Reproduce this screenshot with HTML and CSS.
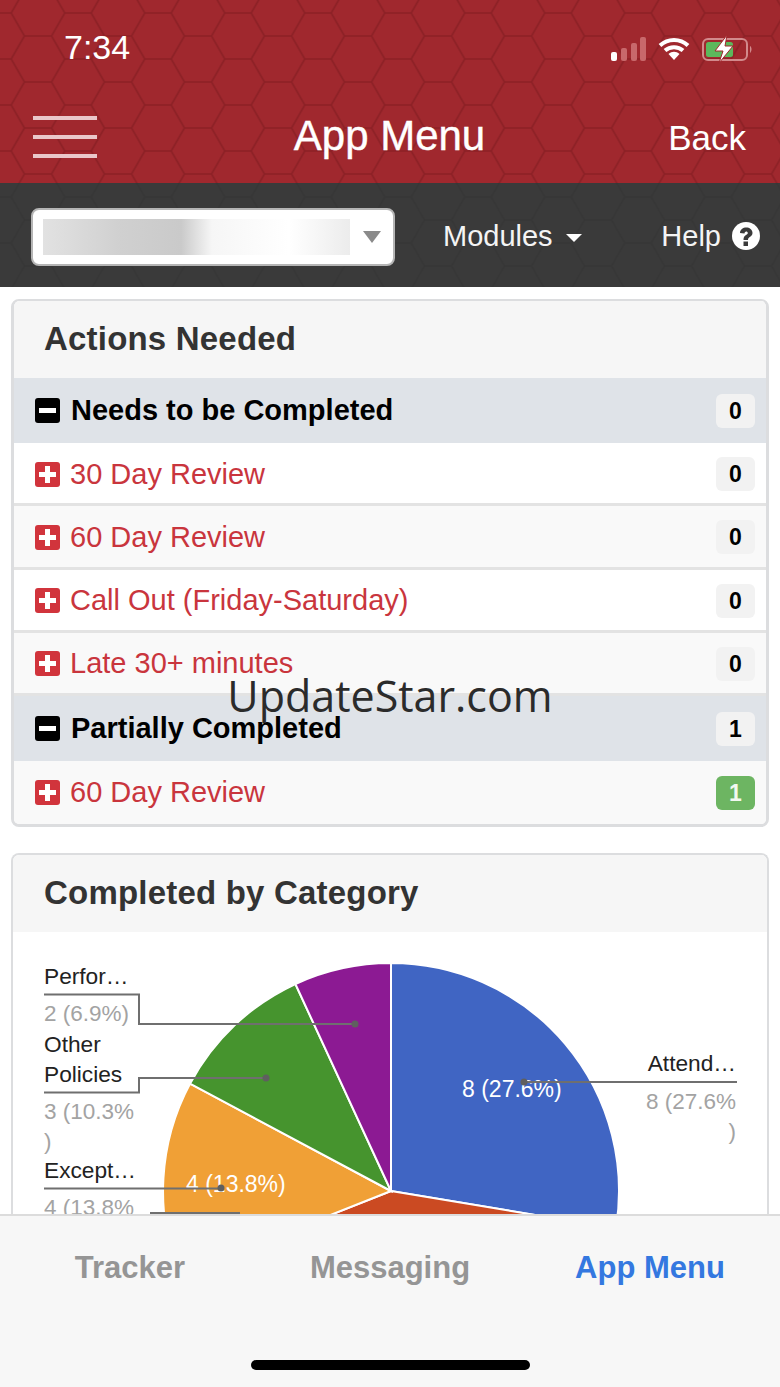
FILE: index.html
```html
<!DOCTYPE html>
<html lang="en">
<head>
<meta charset="utf-8">
<title>App Menu</title>
<link rel="stylesheet" href="styles.css">
</head>
<body>
<div class="screen">
  <header class="top">
    <svg class="hex" width="780" height="287" aria-hidden="true">
      <defs>
        <pattern id="hexred" width="80" height="46" patternUnits="userSpaceOnUse" x="51.500" y="13">
          <path d="M0 23L13.250 0H39.750L53 23L39.750 46H13.250L0 23M53 23H80" fill="none" stroke="#8b2025" stroke-width="1.600"/>
        </pattern>
        <pattern id="hexdark" width="80" height="46" patternUnits="userSpaceOnUse" x="51.500" y="13">
          <path d="M0 23L13.250 0H39.750L53 23L39.750 46H13.250L0 23M53 23H80" fill="none" stroke="#363636" stroke-width="1.600"/>
        </pattern>
      </defs>
      <rect width="780" height="183" fill="url(#hexred)"/>
      <rect y="183" width="780" height="104" fill="url(#hexdark)"/>
    </svg>
    <div class="status">
      <span class="time">7:34</span>
      <div class="status-icons">
        <svg width="36" height="24" viewBox="0 0 36 24" aria-hidden="true">
          <rect x="1" y="15" width="6" height="9" rx="2" fill="#fff"/>
          <rect x="11" y="11" width="6" height="13" rx="2" fill="#c8686b"/>
          <rect x="21" y="6" width="6" height="18" rx="2" fill="#c8686b"/>
          <rect x="30" y="0" width="6" height="24" rx="2" fill="#c8686b"/>
        </svg>
        <svg width="32" height="24" viewBox="0 0 32 24" aria-hidden="true">
          <path d="M2 8.500C10 1 22 1 30 8.500M7 13.500C12 9 20 9 25 13.500" fill="none" stroke="#fff" stroke-width="4"/>
          <path d="M10.500 17C14 14 18 14 21.500 17L16 23Z" fill="#fff"/>
        </svg>
        <svg width="50" height="28" viewBox="0 0 50 28" aria-hidden="true">
          <rect x="1" y="4" width="44" height="21" rx="5" fill="none" stroke="#d28a8c" stroke-width="2"/>
          <rect x="4" y="7" width="27" height="15" rx="2.500" fill="#5cb85c"/>
          <path d="M48 11C50 12 50 16 48 18Z" fill="#d28a8c"/>
          <path d="M25 0L13 16H21L17 28L31 11H23Z" fill="#fff" stroke="#a0282d" stroke-width="1"/>
        </svg>
      </div>
    </div>
    <div class="navbar">
      <div class="burger"><span></span><span></span><span></span></div>
      <h1 class="title">App Menu</h1>
      <span class="back">Back</span>
    </div>
    <div class="toolbar">
      <div class="select">
        <div class="blur"></div>
        <span class="select-arrow"></span>
      </div>
      <span class="tool-link modules">Modules <span class="caret"></span></span>
      <span class="tool-link help">Help
        <svg width="28" height="28" viewBox="0 0 28 28" aria-hidden="true">
          <circle cx="14" cy="14" r="14" fill="#fff"/>
          <path d="M8 11C8 3.500 20.500 3.500 20.500 11C20.500 15 16 14.500 16 18H11.500C11.500 12.500 15.800 13 15.800 11C15.800 8.800 12.500 8.800 12.500 11.500Z" fill="#3a3a3a"/>
          <rect x="11.500" y="19.500" width="4.500" height="4.500" fill="#3a3a3a"/>
        </svg>
      </span>
    </div>
  </header>

  <main class="content">
    <section class="panel">
      <h2 class="panel-title">Actions Needed</h2>
      <div class="row group">
        <span class="toggle minus"></span><span class="label">Needs to be Completed</span><span class="badge">0</span>
      </div>
      <div class="row item white">
        <span class="toggle plus"></span><span class="label">30 Day Review</span><span class="badge">0</span>
      </div>
      <div class="row item">
        <span class="toggle plus"></span><span class="label">60 Day Review</span><span class="badge">0</span>
      </div>
      <div class="row item white">
        <span class="toggle plus"></span><span class="label">Call Out (Friday-Saturday)</span><span class="badge">0</span>
      </div>
      <div class="row item">
        <span class="toggle plus"></span><span class="label">Late 30+ minutes</span><span class="badge">0</span>
      </div>
      <div class="row group">
        <span class="toggle minus"></span><span class="label">Partially Completed</span><span class="badge">1</span>
      </div>
      <div class="row item last">
        <span class="toggle plus"></span><span class="label">60 Day Review</span><span class="badge green">1</span>
      </div>
    </section>

    <section class="panel chart-panel">
      <h2 class="panel-title">Completed by Category</h2>
      <svg class="chart" width="754" height="340" viewBox="13 932 754 340" role="img">
        <path d="M391 1191V963A228 228 0 0 1 615.900 1228.400Z" fill="#4065c3" stroke="#fff" stroke-width="2"/>
        <path d="M391 1191L615.900 1228.400A228 228 0 0 1 179 1275Z" fill="#cb4a22" stroke="#fff" stroke-width="2"/>
        <path d="M391 1191L179 1275A228 228 0 0 1 190 1083.700Z" fill="#f0a036" stroke="#fff" stroke-width="2"/>
        <path d="M391 1191L190 1083.700A228 228 0 0 1 295.400 984Z" fill="#46942e" stroke="#fff" stroke-width="2"/>
        <path d="M391 1191L295.400 984A228 228 0 0 1 391 963Z" fill="#8c1a93" stroke="#fff" stroke-width="2"/>
        <text class="pie-text" x="462" y="1097">8 (27.6%)</text>
        <text class="pie-text" x="186" y="1192">4 (13.8%)</text>
        <g class="leader">
          <path d="M44 994.500H139V1024H355"/>
          <path d="M44 1092.500H139V1078H266"/>
          <path d="M44 1188.500H221"/>
          <path d="M737 1082H522"/>
          <path d="M150 1213H240"/>
        </g>
        <g class="dots">
          <circle cx="355" cy="1024" r="3.500"/>
          <circle cx="266" cy="1078" r="3.500"/>
          <circle cx="221" cy="1188" r="3.500"/>
          <circle cx="524" cy="1082" r="3.500"/>
        </g>
        <text class="name" x="44" y="984">Perfor…</text>
        <text class="val" x="44" y="1021">2 (6.9%)</text>
        <text class="name" x="44" y="1052">Other</text>
        <text class="name" x="44" y="1082">Policies</text>
        <text class="val" x="44" y="1119">3 (10.3%</text>
        <text class="val" x="44" y="1149">)</text>
        <text class="name" x="44" y="1178">Except…</text>
        <text class="val" x="44" y="1215">4 (13.8%</text>
        <text class="name end" x="736" y="1071">Attend…</text>
        <text class="val end" x="736" y="1109">8 (27.6%</text>
        <text class="val end" x="736" y="1139">)</text>
      </svg>
    </section>
  </main>

  <div class="watermark">UpdateStar.com</div>

  <nav class="tabs">
    <div class="tab-row">
      <span class="tab">Tracker</span>
      <span class="tab">Messaging</span>
      <span class="tab active">App Menu</span>
    </div>
    <div class="home-bar"></div>
  </nav>
</div>
</body>
</html>
```

FILE: styles.css
```css
* { box-sizing: border-box; }
html, body { margin: 0; padding: 0; }
body { font-family: "Liberation Sans", Arial, sans-serif; background: #fff; }
.screen { position: relative; width: 780px; height: 1387px; overflow: hidden; background: #fff; }

.top { position: relative; height: 287px; background: linear-gradient(#a0282e 0 183px, #3a3a3a 183px); color: #fff; }
.hex { position: absolute; left: 0; top: 0; }

.status { position: relative; height: 100px; display: flex; justify-content: space-between; align-items: flex-start; padding: 29px 28px 0 64px; }
.time { font-size: 34px; line-height: 36px; color: #fff; }
.status-icons { display: flex; align-items: center; gap: 12px; padding-top: 6px; }

.navbar { position: relative; height: 83px; display: grid; grid-template-columns: 1fr auto 1fr; align-items: start; padding: 14px 34px 0 33px; }
.burger { width: 64px; display: flex; flex-direction: column; gap: 15px; padding-top: 2px; }
.burger span { display: block; height: 4px; background: #eac7ca; }
.title { margin: 0; font-size: 42px; font-weight: 400; line-height: 44px; -webkit-text-stroke: 0.4px #fff; }
.back { justify-self: end; font-size: 35px; line-height: 44px; margin-top: 2px; }

.toolbar { position: relative; height: 104px; display: flex; align-items: center; padding: 0 20px 0 31px; }
.select { width: 364px; height: 58px; margin-top: 4px; background: #fff; border: 2px solid #b5b5b5; border-radius: 8px; display: flex; align-items: center; padding-left: 10px; }
.blur { width: 307px; height: 36px; background: linear-gradient(90deg, #e2e2e2 0, #d0d0d0 25%, #cacaca 45%, #f6f6f6 55%, #fff 80%, #ececec 100%); }
.select-arrow { width: 0; height: 0; margin-left: 13px; border-left: 9px solid transparent; border-right: 9px solid transparent; border-top: 12px solid #8a8a8a; }
.tool-link { font-size: 29px; line-height: 34px; display: flex; align-items: center; color: #f4f4f4; margin-top: 2px; }
.modules { margin-left: 48px; gap: 13px; }
.caret { width: 0; height: 0; border-left: 8px solid transparent; border-right: 8px solid transparent; border-top: 8px solid #fff; margin-top: 3px; }
.help { margin-left: auto; gap: 11px; }

.content { padding: 12px 11px 0; }
.panel { border: solid #dcdddf; border-width: 2px 3px 3px; border-radius: 8px; background: #fff; overflow: hidden; }
.panel-title { margin: 0; height: 77px; padding: 18px 0 0 30px; background: #f6f6f6; font-size: 33px; line-height: 40px; font-weight: 700; color: #333; letter-spacing: 0.2px; }
.row { display: flex; align-items: center; padding: 0 11px 0 21px; font-size: 29px; }
.group { height: 65px; background: #dfe3e8; color: #000; font-weight: 700; }
.item { height: 63.250px; padding-top: 2px; background: #f9f9f9; border-bottom: 3px solid #e3e3e3; color: #c9353d; }
.item.white { background: #fff; }
.item.last { height: 63px; border-bottom: 0; padding-top: 0; }
.label { margin-left: 11px; flex: 1; white-space: nowrap; }
.item .label { margin-left: 10px; }
.toggle { position: relative; flex: none; width: 25px; height: 25px; border-radius: 3px; }
.plus { background: #d1343c; }
.minus { background: #000; }
.toggle::before { content: ""; position: absolute; left: 4px; right: 4px; top: 10px; height: 5px; background: #fff; }
.plus::after { content: ""; position: absolute; top: 4px; bottom: 4px; left: 10px; width: 5px; background: #fff; }
.badge { flex: none; width: 39px; height: 34px; border-radius: 6px; background: #f2f2f2; color: #000; font-size: 23px; font-weight: 700; line-height: 34px; text-align: center; }
.badge.green { background: #6db562; color: #f2f8f0; }

.chart-panel { margin-top: 26px; height: 420px; border-width: 2px 2px 0 2px; }
.chart-panel .panel-title { padding-left: 31px; }
.chart { display: block; }
.leader path { fill: none; stroke: #6f6f6f; stroke-width: 2; }
.dots circle { fill: #5f5f5f; }
.name, .val, .pie-text { font-family: "Liberation Sans", Arial, sans-serif; font-size: 23px; }
.name { fill: #222; font-size: 22.700px; }
.val { fill: #a3a3a3; font-size: 22.500px; }
.pie-text { fill: #fff; }
.end { text-anchor: end; }

.watermark { position: absolute; left: 0; right: 0; top: 666px; text-align: center; font-family: "Open Sans", sans-serif; font-size: 43px; line-height: 60px; color: #2b2b2b; }

.tabs { position: absolute; left: 0; right: 0; bottom: 0; height: 173px; background: #f7f7f7; border-top: 2px solid #dcdcdc; }
.tab-row { display: grid; grid-template-columns: 260px 260px 260px; padding-top: 33px; }
.tab { text-align: center; font-size: 31px; line-height: 38px; font-weight: 700; color: #959595; }
.tab.active { color: #3478e0; }
.home-bar { position: absolute; left: 251px; top: 144px; width: 279px; height: 10px; border-radius: 5px; background: #000; }
```
